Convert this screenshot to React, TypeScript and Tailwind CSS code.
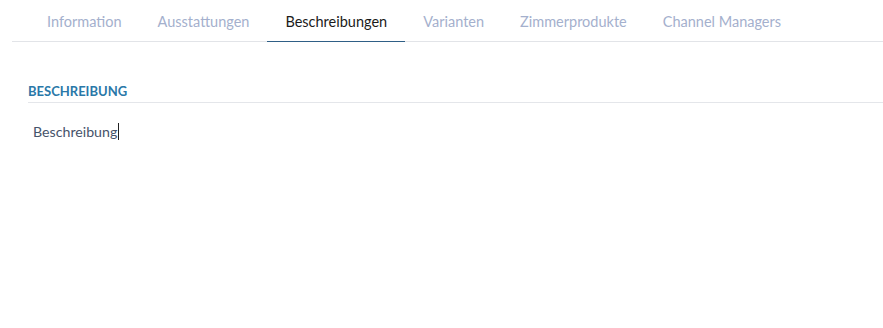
import { useState } from "react";

const tabs = [
  "Information",
  "Ausstattungen",
  "Beschreibungen",
  "Varianten",
  "Zimmerprodukte",
  "Channel Managers",
];

export default function App() {
  const [active, setActive] = useState("Beschreibungen");

  return (
    <div
      className="h-[328px] w-[883px] bg-white"
      style={{ fontFamily: "Lato, 'Noto Sans', sans-serif" }}
    >
      <div className="ml-3 flex border-b border-[#e2e4e8] pl-[17px]">
        {tabs.map((tab) => (
          <button
            key={tab}
            onClick={() => setActive(tab)}
            className={`-mb-px h-[42px] border-b px-[18px] pt-[3px] text-[14.5px] ${
              active === tab
                ? "border-[#2f5f86] text-[#1b1b1b]"
                : "border-transparent text-[#a4b0cd]"
            }`}
          >
            {tab}
          </button>
        ))}
      </div>

      <div className="pl-7 pt-[40px]">
        <h3 className="border-b border-[#e4e6ea] pb-[2px] text-[13px] leading-[18px] font-bold text-[#2a78a8]">
          BESCHREIBUNG
        </h3>
        <div className="pl-[5px] pt-[17px] text-[14.2px] leading-[21px] text-[#46536a]">
          Beschreibung
          <span className="ml-px inline-block h-[17px] w-px translate-y-[3px] bg-[#222]" />
        </div>
      </div>
    </div>
  );
}
